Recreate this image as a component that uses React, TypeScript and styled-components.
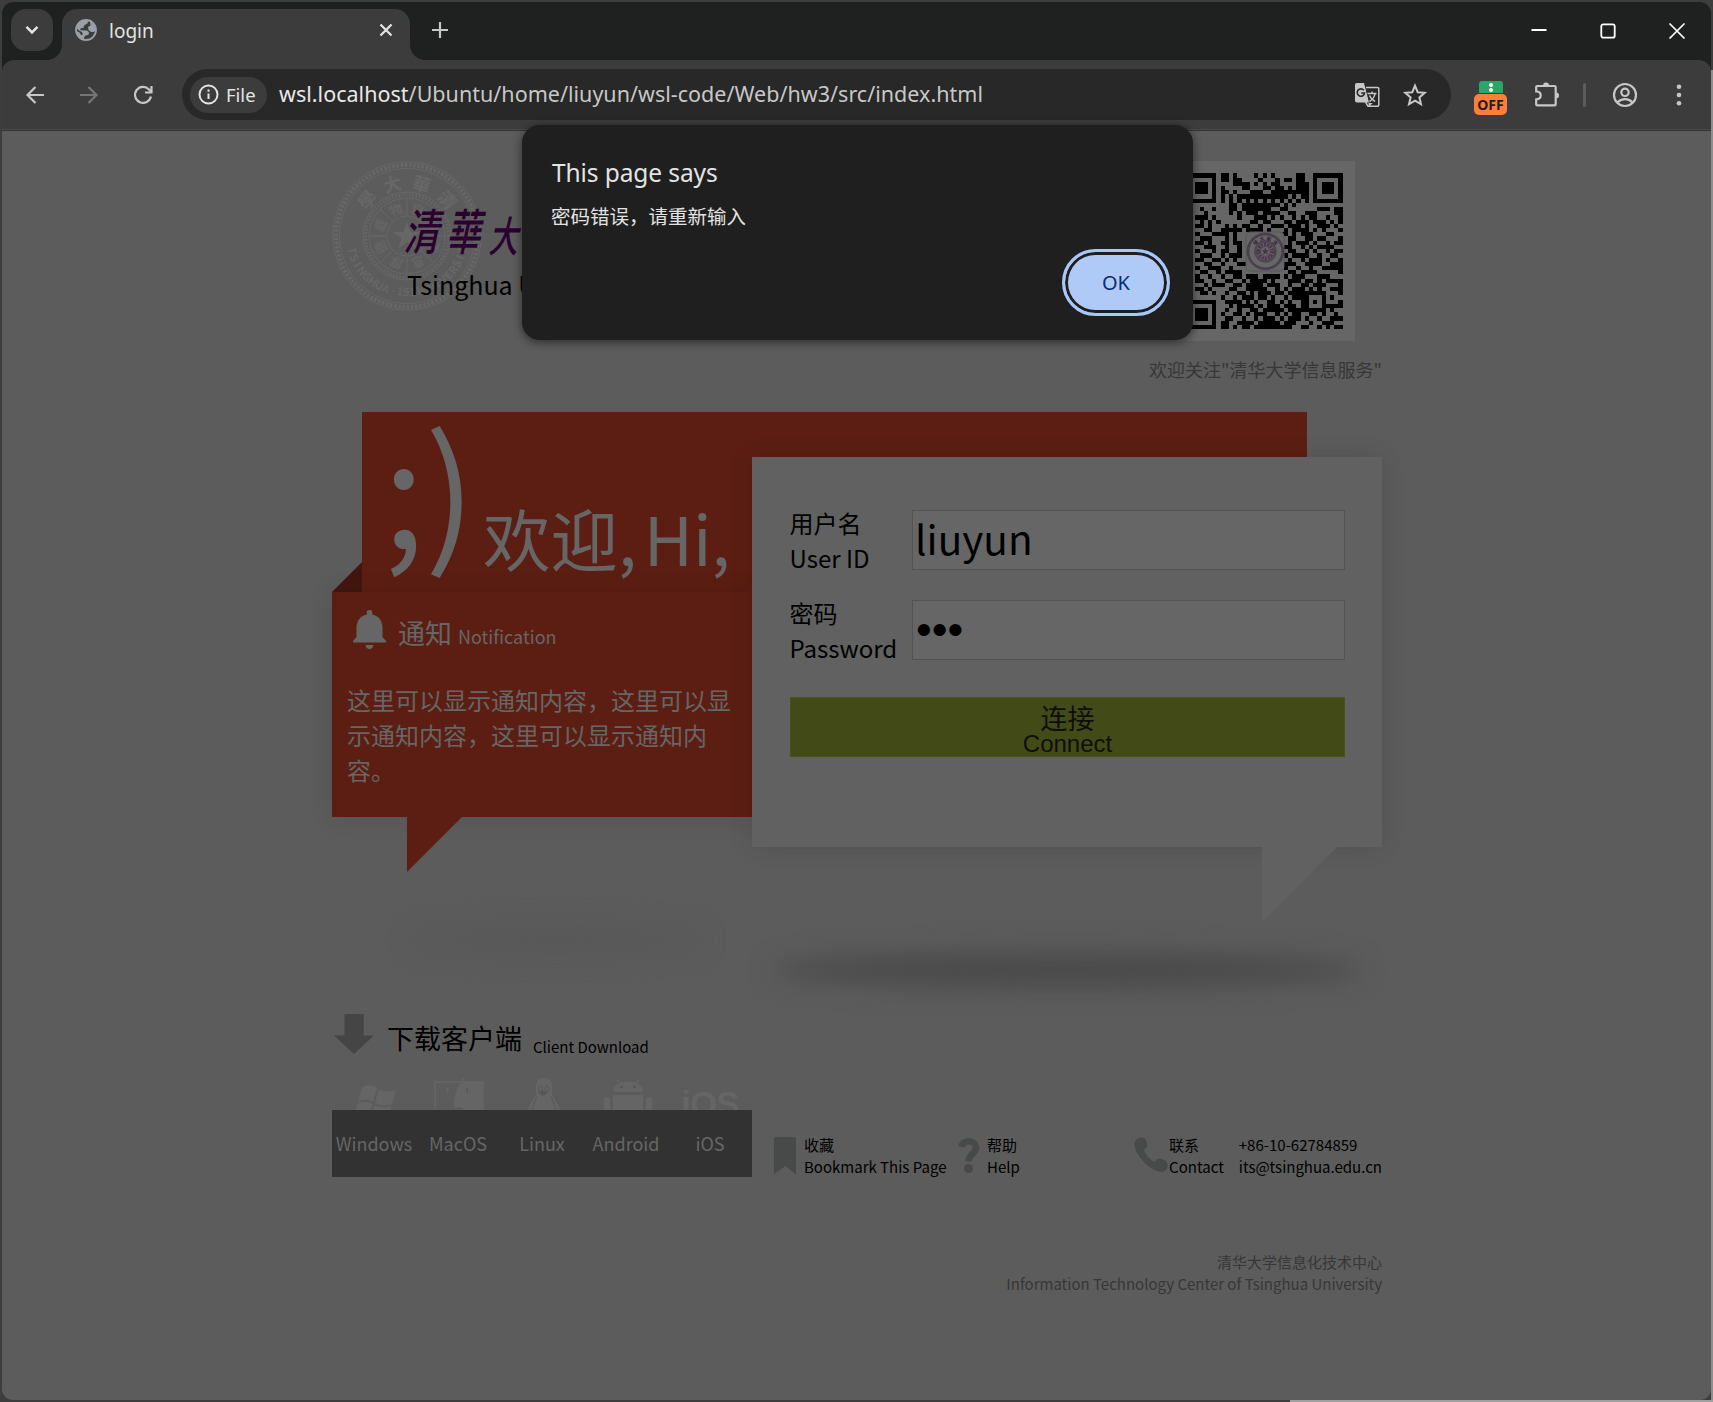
import React from "react";
import styled, { createGlobalStyle, css } from "styled-components";

const CJK = `"Noto Sans CJK SC", "Noto Sans", sans-serif`;
const UI = `"Noto Sans", "Open Sans", "Noto Sans CJK SC", sans-serif`;

const Global = createGlobalStyle`
  * { box-sizing: border-box; }
  html, body { margin: 0; padding: 0; }
  body { background: #393939; overflow: hidden; }
  input, button { font: inherit; margin: 0; border-radius: 0; }
`;

const Desktop = styled.div`
  width: 1713px;
  height: 1402px;
  padding: 2px;
  background:
    linear-gradient(#a0a0a0, #a0a0a0) 1290px 1400px / 423px 2px no-repeat,
    linear-gradient(#8e8e8e, #8e8e8e) 1711px 70px / 2px 1332px no-repeat,
    #3d3d3d;
`;

const Window = styled.div`
  position: relative;
  width: 1709px;
  height: 1398px;
  border-radius: 11px;
  overflow: hidden;
  background: #5c5c5c;
  display: flex;
  flex-direction: column;
`;

/* ---------- browser chrome ---------- */

const TabStrip = styled.div`
  height: 58px;
  flex: none;
  display: flex;
  align-items: flex-start;
  padding: 7px 0 0 9px;
  background: #1f2120;
`;

const TabSearch = styled.div`
  width: 42px;
  height: 42px;
  border-radius: 15px;
  background: #3c3c3c;
  display: grid;
  place-items: center;
`;

const Tab = styled.div`
  position: relative;
  width: 348px;
  height: 51px;
  margin-left: 9px;
  padding: 0 15px 9px 13px;
  border-radius: 15px 15px 0 0;
  background: #3c3c3c;
  display: flex;
  align-items: center;
  &::before, &::after {
    content: "";
    position: absolute;
    bottom: 0;
    width: 15px;
    height: 15px;
  }
  &::before { left: -15px; background: radial-gradient(circle at 0 0, transparent 14.6px, #3c3c3c 15.2px); }
  &::after { right: -15px; background: radial-gradient(circle at 100% 0, transparent 14.6px, #3c3c3c 15.2px); }
`;

const TabTitle = styled.span`
  flex: 1;
  margin-left: 12px;
  font: 19px/26px ${UI};
  color: #e3e3e3;
  padding-top: 1px;
`;

const NewTab = styled.div`
  margin: 9px 0 0 18px;
  width: 24px;
  height: 24px;
`;

const WindowControls = styled.div`
  margin-left: auto;
  margin-right: 22px;
  padding-top: 12px;
  display: flex;
  gap: 45px;
  svg { display: block; }
`;

const Toolbar = styled.div`
  height: 71px;
  padding-top: 9px;
  display: flex;
  align-items: flex-start;
  background: #3c3c3c;
  border-radius: 12px 12px 0 0;
  border-bottom: 1px solid #343434;
  box-shadow: inset 0 -1px 0 #484848;
`;

const ToolbarBack = styled.div`
  background: #1f2120;
  flex: none;
`;

const NavButtons = styled.div`
  width: 180px;
  height: 51px;
  display: flex;
  align-items: center;
  gap: 30px;
  padding-left: 21px;
`;

const Omnibox = styled.div`
  width: 1269px;
  height: 51px;
  border-radius: 26px;
  background: #282828;
  display: flex;
  align-items: center;
  padding: 0 23px 0 8px;
`;

const Chip = styled.div`
  width: 77px;
  height: 36px;
  border-radius: 18px;
  background: #3c3c3c;
  display: flex;
  align-items: center;
  gap: 7px;
  padding-left: 8px;
  font: 18.5px/36px ${UI};
  color: #e3e3e3;
`;

const Url = styled.div`
  flex: 1;
  margin-left: 12px;
  font: 21.5px/30px ${UI};
  letter-spacing: 0.02px;
  color: #c7c7c7;
  white-space: nowrap;
  padding-bottom: 1px;
  b { font-weight: 400; color: #e8e8e8; }
`;

const OmniIcons = styled.div`
  display: flex;
  align-items: center;
  gap: 22px;
`;

const Extensions = styled.div`
  flex: 1;
  height: 51px;
  display: flex;
  align-items: center;
  padding-left: 23px;
`;

const ExtBadge = styled.div`
  width: 33px;
  height: 35px;
  margin-top: 8px;
  display: flex;
  flex-direction: column;
  align-items: center;
`;

const ExtGreen = styled.div`
  width: 24px;
  height: 12px;
  border-radius: 3px 3px 0 0;
  background: #28a766;
  display: flex;
  flex-direction: column;
  align-items: center;
  justify-content: center;
  gap: 1px;
  i { width: 4px; height: 4px; border-radius: 2px; background: #fff; }
`;

const ExtOff = styled.div`
  width: 33px;
  height: 21px;
  margin-top: 1px;
  border-radius: 5px;
  background: #ff7d3d;
  color: #202020;
  font: 700 14px/22px ${UI};
  text-align: center;
`;

const Divider = styled.div`
  width: 3px;
  height: 24px;
  border-radius: 2px;
  background: #5c5c5c;
  margin: 0 26px 0 22px;
`;

/* ---------- alert dialog ---------- */

const Dialog = styled.div`
  position: absolute;
  left: 520px;
  top: 123px;
  width: 671px;
  height: 215px;
  padding: 32px 23px 24px 30px;
  border-radius: 18px;
  background: #1f1f1f;
  box-shadow: 0 2px 8px 1px rgba(0, 0, 0, 0.45);
  display: flex;
  flex-direction: column;
`;

const DialogTitle = styled.div`
  font: 24.5px/32px ${UI};
  letter-spacing: -0.1px;
  color: #e3e3e3;
`;

const DialogText = styled.div`
  margin: 13px 0 0 -1px;
  font: 19.5px/28px ${CJK};
  color: #e3e3e3;
`;

const OkButton = styled.button`
  align-self: flex-end;
  width: 108px;
  height: 67px;
  margin-top: 19px;
  border: 3px solid #a8c7fa;
  border-radius: 34px;
  background: #afcaf7;
  box-shadow: inset 0 0 0 3px #1f1f1f;
  color: #062e6f;
  font: 20px/28px ${UI};
  padding: 0;
`;

/* ---------- page ---------- */

const Page = styled.div`
  width: 1050px;
  margin-left: 330px;
  font-family: ${CJK};
  font-size: 24px;
  color: #000;
`;

const Header = styled.header`
  height: 281px;
  padding-top: 30px;
  display: flex;
  justify-content: space-between;
`;

const Brand = styled.div`
  display: grid;
  height: 150px;
  > * { grid-area: 1 / 1; }
`;

const Wordmark = styled.div`
  padding: 38px 0 0 75px;
  white-space: nowrap;
`;

const Brush = styled.div`
  height: 66px;
  font: 500 49px/60px "Noto Sans CJK TC", ${CJK};
  color: #2b0130;
  display: flex;
  align-items: flex-end;
  gap: 9px;
  padding-bottom: 6px;
  span {
    width: 33px;
    transform: skewX(-12deg) scaleX(0.7);
    transform-origin: 0 60%;
  }
  span:nth-child(3) { font-size: 42px; line-height: 50px; }
`;

const EnglishName = styled.div`
  font-size: 25px;
  line-height: 36px;
  padding-top: 1px;
`;

const QrColumn = styled.div`
  display: flex;
  flex-direction: column;
  align-items: flex-end;
`;

const QrBox = styled.div`
  width: 180px;
  height: 180px;
  margin-right: 27px;
  background: #666;
`;

const Caption = styled.div`
  margin-top: 15px;
  font-size: 18px;
  line-height: 26px;
  color: #373737;
`;

const Stage = styled.main`
  display: grid;
  grid-template-columns: 30px 390px 555px 75px;
  grid-template-rows: 45px 135px 225px 30px;
`;

const Banner = styled.section`
  grid-area: 1 / 2 / 3 / 4;
  background: #5c1e12;
  color: #666;
  display: flex;
  align-items: flex-start;
`;

const Face = styled.span`
  font-size: 150px;
  line-height: 143px;
  margin-left: 21px;
  width: 100px;
  white-space: nowrap;
`;

const Hello = styled.span`
  font-size: 67.5px;
  line-height: 98px;
  margin-top: 76px;
  white-space: nowrap;
  em { font-style: normal; margin-left: 7px; }
`;

const Fold = styled.i`
  grid-area: 2 / 1 / 3 / 2;
  align-self: end;
  width: 30px;
  height: 30px;
  background: #42160f;
  clip-path: polygon(100% 0, 100% 100%, 0 100%);
`;

const panelShadow = css`
  box-shadow: 0 0 22px rgba(0, 0, 0, 0.12);
`;

const Notice = styled.section`
  position: relative;
  grid-area: 3 / 1 / 4 / 3;
  background: #5c1e12;
  color: #666;
  padding: 15px;
  ${panelShadow}
`;

const NoticeHead = styled.div`
  height: 54px;
  display: flex;
  align-items: baseline;
  padding-left: 6px;
  font-size: 27px;
  line-height: 52px;
  svg { align-self: flex-start; margin: 3px 12px 0 0; }
  small { font-size: 18px; margin-left: 6px; }
`;

const NoticeText = styled.p`
  margin: 21px 0 0;
  line-height: 35px;
`;

const Tail = styled.i<{ $left: number; $w: number; $h: number; $color: string }>`
  position: absolute;
  top: 100%;
  left: ${(p) => p.$left}px;
  width: ${(p) => p.$w}px;
  height: ${(p) => p.$h}px;
  background: ${(p) => p.$color};
  clip-path: polygon(0 0, 100% 0, 0 100%);
`;

const Card = styled.form`
  position: relative;
  grid-area: 2 / 3 / 5 / 5;
  background: #616161;
  padding: 53px 37px 0 38px;
  ${panelShadow}
`;

const Field = styled.label`
  display: flex;
  justify-content: space-between;
  height: 60px;
  margin-bottom: 30px;
  span { line-height: 35px; margin: -5px 0 0 -0.5px; height: 70px; }
`;

const Input = styled.input<{ $secret?: boolean }>`
  width: 433px;
  height: 60px;
  padding: ${(p) => (p.$secret ? "0 3px" : "0 2px 5px")};
  border: 1px solid #535353;
  background: #666;
  color: #000;
  font: ${(p) => (p.$secret ? `45px/56px "Liberation Sans", sans-serif` : `40.5px/53px ${CJK}`)};
  outline: none;
`;

const Connect = styled.button`
  display: block;
  width: 555px;
  height: 60px;
  margin-top: 37px;
  padding: 6px 0 0;
  border: 1px solid #485317;
  background: #424a17;
  color: #0e0f08;
  text-align: center;
  font: 24px/24px "Liberation Sans", sans-serif;
  span { display: block; font: 27px/28px ${CJK}; }
`;

const Shadows = styled.div`
  height: 167px;
  display: flex;
  align-items: flex-start;
`;

const Ellipse = styled.i<{ $x: number; $y: number; $w: number; $h: number; $c: string }>`
  flex: none;
  margin: ${(p) => p.$y}px 0 0 ${(p) => p.$x}px;
  width: ${(p) => p.$w}px;
  height: ${(p) => p.$h}px;
  border-radius: 50%;
  background: ${(p) => p.$c};
  filter: blur(12px);
`;

const DownloadTitle = styled.div`
  height: 62px;
  display: flex;
  align-items: flex-start;
  font-size: 27px;
  line-height: 48px;
  padding-left: 2px;
  svg { margin-right: 13px; }
  small { font-size: 15px; line-height: 22px; margin: 22px 0 0 11px; }
`;

const Bottom = styled.div`
  display: flex;
`;

const Platforms = styled.div`
  width: 420px;
  display: grid;
  grid-template-columns: repeat(5, 84px);
  grid-template-rows: 34px 67px;
`;

const PlatformIcon = styled.div<{ $x?: number; $y: number }>`
  overflow: hidden;
  display: flex;
  justify-content: center;
  padding: ${(p) => p.$y}px 0 0 ${(p) => p.$x || 0}px;
  svg { flex: none; display: block; }
`;

const PlatformName = styled.div`
  background: #323232;
  color: #666;
  font-size: 18px;
  line-height: 66px;
  text-align: center;
`;

const Links = styled.div`
  flex: 1;
  display: flex;
  padding: 58px 0 0 21px;
  font-size: 15px;
  line-height: 21.5px;
  white-space: nowrap;
`;

const Link = styled.div<{ $w?: number }>`
  display: flex;
  width: ${(p) => (p.$w ? p.$w + "px" : "auto")};
  svg { flex: none; margin-top: 2px; }
`;

const Details = styled.div`
  margin-left: 15px;
`;

const Phone = styled.div`
  margin-left: auto;
`;

const Footer = styled.footer`
  margin-top: 74px;
  text-align: right;
  font-size: 15px;
  line-height: 21.5px;
  color: #373737;
`;

/* ---------- drawings ---------- */

const QR_ROWS = [
  "8-9 11 16 18 20 26-27", "8-9 11-12 17 21 23-24 26-27", "11-14 16 18 20-21 26-28",
  "8 13-14 18-19 21-22 24 26-28", "8-9 11 15-17 20-28", "8 10 12-23 25 27-28",
  "8 10 12 14 16 18 20 22 24 26 28", "10-11 13-21 23 25",
  "3 6 10-11 13-19 22-23 31-33 35-36", "4 10 12 14-16 18-21 24-25 28-30 35-36",
  "2-4 6 12 16-18 20 22 25 27 29-30 33 36", "3 5 7 15-16 18-19 23-24 26-28 30-32 34 36",
  "2-3 5 9 11 13-14 17 20-22 24-26 28 31-33 35", "4-5 8-12 14-17 19 23 25-28 30 32 36",
  "2 6-9 11 22-23 25 27-29 33-34", "3-5 9 11 24-25 28-29 31-32 36",
  "2-3 5 8-9 11-12 24 26-28 30 33 35-36", "4-6 9 12 23-24 27 29 31-34",
  "2 6 8-9 12 24-25 28 30 33 35-36", "3-5 8 10-12 23 25-28 31 34-35",
  "2-3 6-7 9 11 24 27 29-31 33 36", "4-5 8 12-13 23-25 28-31 34-36",
  "2 5-7 10 23 26 29 32-36", "3-4 7 9-12 24-25 27-30 36",
  "2 5 8 11-12 14-16 18-21 23 25-27 31-33", "2-3 6 9-10 13 15-18 20 24-26 28-29 31 33-36",
  "4 6-8 11-12 14-17 19-21 24 27-28 30-32 36", "2-3 5 10-11 14-18 21 23 25-27 29 31 34-36",
  "3-4 6 9 12-13 15 17-19 21-22 24-32 36", "8 11 13-15 17-18 20 23 25-28 32 34",
  "9-12 14 16 19-20 22 24 27-28 30 32 36", "10 12-15 17 19-21 23-25 27-28 32-36",
  "9 12 15-16 18-22 24-32 34", "8 11-12 14 16-18 21 23 25-26 29-30 32 35",
  "9-10 13 16 18-20 22 24-26 28 31 34-36", "8-9 12-15 17-21 23-25 29 32-34",
  "8-9 11 13-14 16-24 27-28 31 33 35-36",
];

const qrPath = QR_ROWS.map((row, y) =>
  row.split(" ").map((part) => {
    const [a, b = a] = part.split("-").map(Number);
    return `M${a} ${y}h${b - a + 1}v1h-${b - a + 1}z`;
  }).join("")
).join("");

const Seal = ({ color, width = 1 }: { color: string; width?: number }) => (
  <g fill="none" stroke={color} strokeWidth={width}>
    <circle cx="75" cy="75" r="74.2" />
    <circle cx="75" cy="75" r="71" strokeWidth={4 * width} strokeDasharray="2.6 1.6" />
    <circle cx="75" cy="75" r="67.5" />
    <circle cx="75" cy="75" r="44" />
    <circle cx="75" cy="75" r="41.5" strokeWidth={3 * width} strokeDasharray="1.4 2" />
    <circle cx="75" cy="75" r="38" />
    <circle cx="75" cy="75" r="20" />
    <path d="M75 37v17M75 96v17M37 75h17M96 75h17M39 75h16M48 48l13 13M102 102l-13-13M102 48l-13 13M48 102l13-13" />
    <path fill={color} d="m75 62 3 9.3h9.8l-7.9 5.7 3 9.3-7.9-5.7-7.9 5.7 3-9.3-7.9-5.7h9.8z" />
  </g>
);

const around = (chars: string, r: number, from: number, step: number, size: number, color: string, inward = false) =>
  chars.split("").map((c, i) => {
    const a = from + step * i;
    return (
      <text key={i} x="75" y={inward ? 75 + r : 75 - r} fontSize={size} fontWeight="700" fill={color}
        textAnchor="middle" dominantBaseline="central" fontFamily='"Noto Sans CJK TC", sans-serif'
        transform={`rotate(${a} 75 75)`}>{c}</text>
    );
  });

const Emblem = () => (
  <svg width="150" height="150" viewBox="0 0 150 150">
    <Seal color="#676767" />
    {around("學大華清", 55, -48, 32, 18, "#676767")}
    {around("TSINGHUA", 56, 75, -7.6, 11, "#676767", true)}
    {around("UNIVERSITY", 56, -18, -7.2, 11, "#676767", true)}
    {around("-1911-", 55, 14, -6.5, 11, "#676767", true)}
    {around("自強不息厚德載物", 29, 22, 45, 13, "#656565")}
  </svg>
);

const QrCode = () => (
  <svg width="180" height="180" viewBox="0 0 180 180">
    <g transform="translate(12 12.4) scale(4.205)" shapeRendering="crispEdges">
      <path d={qrPath} />
      {[[0, 0], [30, 0], [0, 30]].map(([x, y]) => (
        <g key={`${x}-${y}`} transform={`translate(${x} ${y})`}>
          <path fillRule="evenodd" d="M0 0h7v7h-7zM1 1v5h5v-5z" />
          <path d="M2 2h3v3h-3z" />
        </g>
      ))}
    </g>
    <rect x="71" y="71" width="38" height="39" rx="4" fill="#666" stroke="#585858" />
    <g transform="translate(72 72) scale(0.245)">
      <Seal color="#433447" width={2.4} />
      {around("學大華清", 56, -48, 32, 20, "#3b2840")}
      <circle cx="75" cy="75" r="29" fill="none" stroke="#4a3a4e" strokeWidth="13" strokeDasharray="9 4" />
    </g>
  </svg>
);

const stroke = { fill: "none", stroke: "#c7c7c7", strokeWidth: 2.2 } as const;

const Globe = () => (
  <svg width="22" height="22" viewBox="0 0 22 22">
    <circle cx="11" cy="11" r="10" fill="#3c3c3c" stroke="#9aa0a6" strokeWidth="1.8" />
    <path fill="#9aa0a6" d="M1.500 9C3 4 7 1 12 1.300l1 .7-.5 2.500-3.500 2L8.500 9H5.800l-.5 2.300 5.700.2c2 .3 3 1.200 3 3l-1 1.500-2.500.5-1.500 2v2.300C5 20 1.500 16 1.500 12l3 1.500 1.500 2.500 2-.5-1-2.500L4 11.500zM15 2.500c3.500 2 5.500 5 5.500 9L19 13h-3l-2.500-2-.5-3 2.500-1.500z" />
  </svg>
);

const Gtranslate = () => (
  <svg width="26" height="26" viewBox="0 0 26 26">
    <path d="M12 5.500h11.500a1.300 1.300 0 0 1 1.300 1.300V22.500a1.800 1.800 0 0 1-1.800 1.800H14L11.500 20" fill="none" stroke="#c7c7c7" strokeWidth="1.500" />
    <path d="M2.800 1h7.200l5 19.500H2.800A1.800 1.800 0 0 1 1 18.700V2.800A1.800 1.800 0 0 1 2.800 1z" fill="#c7c7c7" />
    <path d="m14.500 21 .2 4 4-4z" fill="#c7c7c7" />
    <path d="M9.800 8.200A3.700 3.700 0 1 0 10.600 11H7.200" fill="none" stroke="#282828" strokeWidth="1.600" />
    <path d="M13.500 11.500h9M18 9.500v2M21 11.500c-.5 3.500-3 6.500-5.500 8M15.500 13.500c1 2.500 3 4.500 5.500 6" fill="none" stroke="#c7c7c7" strokeWidth="1.500" />
  </svg>
);

const Windows = () => (
  <svg width="42" height="48" viewBox="0 0 42 48">
    <g fill="#656565">
      <path d="M7 2.500C12-.5 17-.5 22 2.800L18 17C13 14 8 14 3 17z" />
      <path d="M24 4c5 3 11 3 17 1l-4 14c-6 2-12 2-17-1z" />
      <path d="M2.500 19c5-3 10-3 15 0l-4 14c-5-3-10-3-15 0zM19.500 20c5 3 11 3 17 1l-4 14c-6 2-12 2-17-1z" />
    </g>
  </svg>
);

const Finder = () => (
  <svg width="50" height="50" viewBox="0 0 50 50">
    <path d="M1 5h48v40H1z" fill="none" stroke="#656565" strokeWidth="1.5" />
    <path d="M28 4.500h21.500V45H31c-1.500-5-2-9-2-14.500h-9c0-11 2-19 8-26z" fill="#656565" />
    <path d="M27.500 5 30 1" stroke="#656565" strokeWidth="1.5" />
    <path d="M13.500 11v5" stroke="#656565" strokeWidth="2" />
    <path d="M33 11v5" stroke="#5a5a5a" strokeWidth="2" />
  </svg>
);

const Tux = () => (
  <svg width="36" height="50" viewBox="0 0 36 50">
    <path d="M18 0c-5.500 0-8 3.500-8 8 0 5 .5 7-1.500 11C6 24 2 28 1.500 36h33C34 28 30 24 27.500 19c-2-4-1.500-6-1.500-11 0-4.500-2.500-8-8-8z" fill="#656565" />
    <ellipse cx="14.500" cy="10.500" rx="2" ry="3" fill="none" stroke="#565656" />
    <ellipse cx="21" cy="10.500" rx="2" ry="3" fill="none" stroke="#565656" />
    <path d="m12 14.500 5-2 5 2-5 3.500z" fill="#575757" />
    <path d="M11 19C8 25 6 28 6 36M25 19c3 6 5 9 5 17" fill="none" stroke="#5a5a5a" strokeWidth="1.3" />
  </svg>
);

const Android = () => (
  <svg width="50" height="50" viewBox="0 0 50 50">
    <g fill="#656565">
      <path d="M10 13C10 6 17 2.500 25 2.500S40 6 40 13z" />
      <path d="M10 16h30v30H10zM1 21a3 3 0 0 1 6 0v20H1zM43 21a3 3 0 0 1 6 0v20h-6z" />
    </g>
    <path d="m14 0 3.500 5M36 0l-3.500 5" stroke="#656565" strokeWidth="1.500" />
    <circle cx="18.500" cy="8" r="1.400" fill="#565656" />
    <circle cx="31.500" cy="8" r="1.400" fill="#565656" />
  </svg>
);

const IosMark = styled.span`
  font: 700 35px/40px "Liberation Sans", sans-serif;
  color: #656565;
  letter-spacing: -1px;
  height: 60px;
`;

export default function App() {
  return (
    <>
      <Global />
      <Desktop>
        <Window>
          <TabStrip>
            <TabSearch>
              <svg width="14" height="10" viewBox="0 0 14 10"><path d="m1.500 1.800 5.500 5.500 5.500-5.500" fill="none" stroke="#e3e3e3" strokeWidth="2.600" /></svg>
            </TabSearch>
            <Tab>
              <Globe />
              <TabTitle>login</TabTitle>
              <svg width="18" height="18" viewBox="0 0 18 18"><path d="m3.500 3.500 11 11m0-11-11 11" stroke="#e3e3e3" strokeWidth="2.300" /></svg>
            </Tab>
            <NewTab><svg width="24" height="24" viewBox="0 0 24 24"><path d="M12 4v16M4 12h16" stroke="#c7c7c7" strokeWidth="2.200" /></svg></NewTab>
            <WindowControls>
              <svg width="24" height="24" viewBox="0 0 24 24"><path d="M4.500 9h15" stroke="#fff" strokeWidth="1.800" /></svg>
              <svg width="24" height="24" viewBox="0 0 24 24"><rect x="5.300" y="3.300" width="13.400" height="13.400" rx="2" fill="none" stroke="#fff" strokeWidth="1.800" /></svg>
              <svg width="24" height="24" viewBox="0 0 24 24"><path d="m4.500 2.500 15 15m0-15-15 15" stroke="#fff" strokeWidth="1.700" /></svg>
            </WindowControls>
          </TabStrip>
          <ToolbarBack>
            <Toolbar>
              <NavButtons>
                <svg width="24" height="24" viewBox="0 0 24 24"><path d="M21 12H5M12.500 4 4.500 12l8 8" {...stroke} /></svg>
                <svg width="24" height="24" viewBox="0 0 24 24"><path d="M3 12h16M11.500 4l8 8-8 8" {...stroke} stroke="#757575" /></svg>
                <svg width="24" height="24" viewBox="0 0 24 24"><path d="M19.900 13.500A8 8 0 1 1 18 6.500l2 2.200M20.500 3v6.500H14" {...stroke} /></svg>
              </NavButtons>
              <Omnibox>
                <Chip>
                  <svg width="21" height="21" viewBox="0 0 21 21"><circle cx="10.500" cy="10.500" r="9" fill="none" stroke="#e3e3e3" strokeWidth="2" /><path d="M10.500 9.500v5.500M10.500 5.500v2.200" stroke="#e3e3e3" strokeWidth="2" /></svg>
                  File
                </Chip>
                <Url><b>wsl.localhost</b>/Ubuntu/home/liuyun/wsl-code/Web/hw3/src/index.html</Url>
                <OmniIcons>
                  <Gtranslate />
                  <svg width="26" height="26" viewBox="0 0 26 26"><path d="m13 3.700 2.700 6.500 7 .6-5.300 4.600 1.600 6.800-6-3.600-6 3.600 1.600-6.800-5.300-4.600 7-.6z" fill="none" stroke="#c7c7c7" strokeWidth="2" /></svg>
                </OmniIcons>
              </Omnibox>
              <Extensions>
                <ExtBadge>
                  <ExtGreen><i /><i /></ExtGreen>
                  <ExtOff>OFF</ExtOff>
                </ExtBadge>
                <svg width="27" height="27" viewBox="0 0 27 27" style={{ marginLeft: 27 }}>
                  <path d="M3.200 5h17.300a1.200 1.200 0 0 1 1.200 1.200v17a1.200 1.200 0 0 1-1.200 1.200H3.200a1 1 0 0 1-1-1v-5c6-.5 6-7.500 0-8V6a1 1 0 0 1 1-1z" {...stroke} />
                  <path d="M9 4.500a3 3 0 0 1 6 0zM22 11.500a3 3 0 0 1 0 6z" fill="#c7c7c7" />
                </svg>
                <Divider />
                <svg width="26" height="26" viewBox="0 0 26 26"><circle cx="13" cy="13" r="11" {...stroke} /><circle cx="13" cy="10.300" r="3.700" {...stroke} /><path d="M5.500 20.500c4-4.500 11-4.500 15 0" {...stroke} /></svg>
                <svg width="6" height="24" viewBox="0 0 6 24" style={{ marginLeft: 38 }}><g fill="#c7c7c7"><circle cx="3" cy="3.800" r="2.300" /><circle cx="3" cy="12" r="2.300" /><circle cx="3" cy="20.200" r="2.300" /></g></svg>
              </Extensions>
            </Toolbar>
          </ToolbarBack>

          <Page>
            <Header>
              <Brand>
                <Emblem />
                <Wordmark>
                  <Brush><span>清</span><span>華</span><span>大</span><span>學</span></Brush>
                  <EnglishName>Tsinghua University</EnglishName>
                </Wordmark>
              </Brand>
              <QrColumn>
                <QrBox><QrCode /></QrBox>
                <Caption>欢迎关注"清华大学信息服务"</Caption>
              </QrColumn>
            </Header>

            <Stage>
              <Banner>
                <Face>;)</Face>
                <Hello>欢迎,<em>Hi,</em></Hello>
              </Banner>
              <Fold />
              <Notice>
                <NoticeHead>
                  <svg width="33" height="40" viewBox="0 0 33 40">
                    <path fill="#666" d="M16.500 0a2.700 2.700 0 0 1 2.700 3v1.500C26 6 29.500 11 29.500 18v9l3.500 4v1.500H0V31l3.500-4v-9C3.500 11 7 6 13.800 4.500V3a2.700 2.700 0 0 1 2.700-3zM12.700 35h7.600c0 5.500-7.600 5.500-7.600 0z" />
                  </svg>
                  通知<small>Notification</small>
                </NoticeHead>
                <NoticeText>这里可以显示通知内容，这里可以显示通知内容，这里可以显示通知内容。</NoticeText>
                <Tail $left={75} $w={55} $h={55} $color="#5c1e12" />
              </Notice>
              <Card>
                <Field><span>用户名<br />User ID</span><Input defaultValue="liuyun" /></Field>
                <Field><span>密码<br />Password</span><Input $secret type="password" defaultValue="123" /></Field>
                <Connect type="button"><span>连接</span>Connect</Connect>
                <Tail $left={510} $w={75} $h={75} $color="#616161" />
              </Card>
            </Stage>

            <Shadows>
              <Ellipse $x={80} $y={80} $w={290} $h={26} $c="#575757" />
              <Ellipse $x={70} $y={105} $w={590} $h={36} $c="#4a4a4a" />
            </Shadows>

            <DownloadTitle>
              <svg width="40" height="40" viewBox="0 0 40 40"><path d="M10.500 0h19.200v21.500H40L20 40 0 21.500h10.500z" fill="#454545" /></svg>
              下载客户端<small>Client Download</small>
            </DownloadTitle>

            <Bottom>
              <Platforms>
                <PlatformIcon $y={9} $x={4}><Windows /></PlatformIcon>
                <PlatformIcon $y={1} $x={1}><Finder /></PlatformIcon>
                <PlatformIcon $y={2} $x={3}><Tux /></PlatformIcon>
                <PlatformIcon $y={3} $x={4}><Android /></PlatformIcon>
                <PlatformIcon $y={8} $x={0}><IosMark>iOS</IosMark></PlatformIcon>
                {["Windows", "MacOS", "Linux", "Android", "iOS"].map((n) => <PlatformName key={n}>{n}</PlatformName>)}
              </Platforms>
              <Links>
                <Link $w={183}>
                  <svg width="31" height="40" viewBox="0 0 31 40"><path d="M3 1h18a2 2 0 0 1 2 2v35.500L12.500 30 1 38V3a2 2 0 0 1 2-2z" fill="#474a49" /></svg>
                  <div>收藏<br />Bookmark This Page</div>
                </Link>
                <Link>
                  <svg width="31" height="38" viewBox="0 0 31 38">
                    <path d="M5.500 11c1-8 15-7.500 14.500 1-.5 6-7.500 6-7.500 13.500" fill="none" stroke="#474a49" strokeWidth="6.500" />
                    <circle cx="12.500" cy="32.500" r="4.500" fill="#474a49" />
                  </svg>
                  <div>帮助<br />Help</div>
                </Link>
                <Phone>
                  <Link>
                    <svg width="35" height="38" viewBox="0 0 35 38">
                      <path d="M2 4C6 0 12 1 13 7c1 4-1 5-3 7 2 5 5 9 10 12 3-4 5-4 8-3 6 2 7 7 4 11-4 4-12 1-19-5C5 22-3 10 2 4z" fill="#474a49" />
                    </svg>
                    <div>联系<br />Contact</div>
                    <Details>+86-10-62784859<br />its@tsinghua.edu.cn</Details>
                  </Link>
                </Phone>
              </Links>
            </Bottom>

            <Footer>清华大学信息化技术中心<br />Information Technology Center of Tsinghua University</Footer>
          </Page>

          <Dialog>
            <DialogTitle>This page says</DialogTitle>
            <DialogText>密码错误，请重新输入</DialogText>
            <OkButton>OK</OkButton>
          </Dialog>
        </Window>
      </Desktop>
    </>
  );
}
